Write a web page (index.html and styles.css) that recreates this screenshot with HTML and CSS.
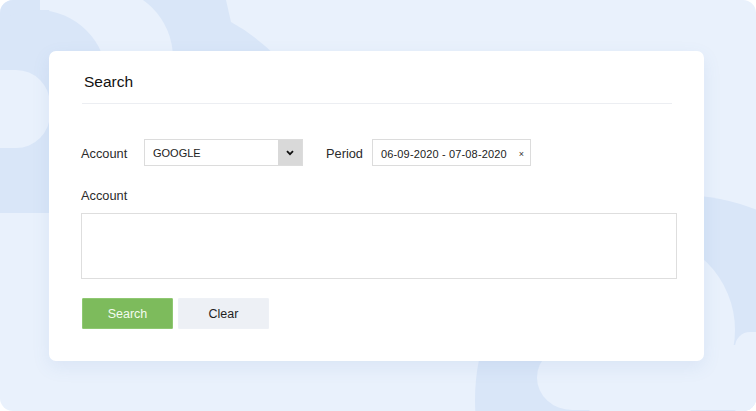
FILE: index.html
```html
<!DOCTYPE html>
<html>
<head>
<meta charset="utf-8">
<link rel="stylesheet" href="styles.css">
</head>
<body>
<div class="frame">
  <svg class="bg" width="756" height="411" viewBox="0 0 756 411" aria-hidden="true">
    <path class="dark" d="M0 0 H226 L231 22 Q255 35 278 58 V213 H0 Z"/>
    <circle class="light" cx="102" cy="58" r="71"/>
    <rect class="light" x="40" y="-10" width="60" height="20"/>
    <circle class="dark" cx="37" cy="80" r="70"/>
    <rect class="light" x="-40" y="70" width="90" height="78" rx="34"/>
    <circle class="dark" cx="680" cy="400" r="205"/>
    <circle class="light" cx="640" cy="330" r="95"/>
    <rect class="light" x="537" y="345" width="260" height="65" rx="35"/>
    <rect class="light" x="735" y="332" width="40" height="90" rx="15"/>
  </svg>

  <section class="card">
    <header class="card-head">
      <h1 class="title">Search</h1>
    </header>

    <div class="row">
      <label class="label label-account">Account</label>
      <div class="select">
        <span class="select-value">GOOGLE</span>
        <span class="select-arrow">
          <svg width="8" height="6" viewBox="0 0 8 6"><path d="M1 1.2 L4 4.2 L7 1.2" fill="none" stroke="#111" stroke-width="1.8"/></svg>
        </span>
      </div>
      <label class="label label-period">Period</label>
      <div class="date">
        <span class="date-value">06-09-2020 - 07-08-2020</span>
        <span class="date-clear">×</span>
      </div>
    </div>

    <label class="label label-block">Account</label>
    <div class="textarea"></div>

    <div class="actions">
      <button class="btn btn-search">Search</button>
      <button class="btn btn-clear">Clear</button>
    </div>
  </section>
</div>
</body>
</html>
```

FILE: styles.css
```css
* { box-sizing: border-box; }
html, body { margin: 0; padding: 0; background: #ffffff; }
body { font-family: "Liberation Sans", Arial, sans-serif; color: #222; }

.frame {
  position: relative;
  width: 756px;
  height: 411px;
  border-radius: 13px;
  overflow: hidden;
  background: #e9f1fc;
  padding: 51px 0 0 49px;
}
.bg { position: absolute; left: 0; top: 0; }
.bg .dark { fill: #d9e6f8; }
.bg .light { fill: #e9f1fc; }

.card {
  position: relative;
  width: 655px;
  height: 310px;
  background: #fff;
  border-radius: 7px;
  box-shadow: 0 6px 18px rgba(90, 130, 190, 0.10);
  padding: 0 27px 0 32px;
}

.card-head {
  width: 590px;
  margin-left: 1px;
  padding: 22px 0 12px 2px;
  border-bottom: 1px solid #eceef2;
}
.title {
  margin: 0;
  font-size: 15.5px;
  line-height: 18px;
  font-weight: normal;
  color: #111;
}

.row {
  display: flex;
  align-items: center;
  margin-top: 35px;
  height: 27px;
}
.label {
  font-size: 12.8px;
  line-height: 16px;
  color: #2b2b2b;
}
.row .label { padding-top: 2px; }
.label-account { width: 63px; }
.label-period { width: 46px; margin-left: 23px; }

.select {
  display: flex;
  width: 159px;
  height: 27px;
  border: 1px solid #dcdcdc;
  background: #fff;
}
.select-value {
  flex: 1;
  font-size: 11px;
  line-height: 27px;
  padding-left: 8px;
  color: #222;
}
.select-arrow {
  width: 24px;
  background: #d9d9d9;
  display: flex;
  align-items: center;
  justify-content: center;
  padding-top: 1px;
}

.date {
  display: flex;
  align-items: center;
  width: 159px;
  height: 27px;
  border: 1px solid #dcdcdc;
  padding: 2px 6px 0 8px;
  white-space: nowrap;
}
.date-value {
  flex: 1;
  font-size: 11px;
  color: #222;
  letter-spacing: 0.15px;
}
.date-clear {
  font-size: 9px;
  color: #333;
}

.label-block {
  display: block;
  margin-top: 22px;
}

.textarea {
  margin-top: 9px;
  width: 596px;
  height: 66px;
  border: 1px solid #dedede;
}

.actions {
  display: flex;
  gap: 5px;
  margin-top: 19px;
  margin-left: 1px;
}
.btn {
  width: 91px;
  height: 31px;
  font-family: inherit;
  font-size: 12.5px;
  border-radius: 1px;
  padding: 1px 0 0;
  cursor: pointer;
}
.btn-search {
  background: #7dbb5c;
  border: 1px solid #8fc872;
  color: #f4fbef;
}
.btn-clear {
  background: #edf0f5;
  border: 1px solid #eef1f6;
  color: #1f1f1f;
}
```
